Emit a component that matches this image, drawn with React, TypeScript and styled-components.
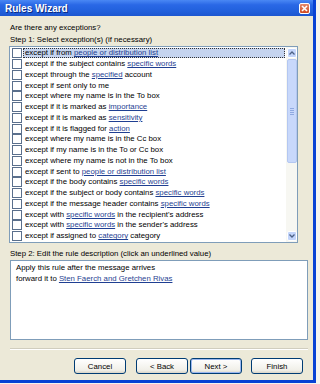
import React from "react";
import styled, { createGlobalStyle } from "styled-components";

const Global = createGlobalStyle`
  html, body { margin: 0; padding: 0; background: #f4f4f0; }
  body { font-family: Tahoma, "Liberation Sans", Arial, sans-serif; }
`;

const Window = styled.div`
  width: 313px;
  height: 380px;
  background: #ece9d8;
  border-right: 3px solid #0842d4;
  border-bottom: 3px solid #0842d4;
  display: flex;
  flex-direction: column;
`;

const TitleBar = styled.div`
  height: 16px;
  flex: none;
  background: linear-gradient(#4a88f4 0%, #2a68e6 30%, #2160dc 70%, #1c56d0 100%);
  display: flex;
  align-items: center;
  justify-content: space-between;
  padding: 0 3px 0 5px;
`;

const Title = styled.span`
  color: #fff;
  font-family: "Liberation Sans", Arial, sans-serif;
  font-weight: bold;
  font-size: 10px;
  text-shadow: 1px 1px 0 #0a2a80;
`;

const CloseBtn = styled.div`
  width: 9px;
  height: 9px;
  border: 1px solid #fff;
  border-radius: 2px;
  background: linear-gradient(#e58a6c, #d14a22);
  display: flex;
  align-items: center;
  justify-content: center;
`;

const Body = styled.div`
  flex: 1;
  display: flex;
  flex-direction: column;
  padding: 6px 7px 0 10px;
  font-family: "Liberation Sans", Arial, sans-serif;
  font-size: 7.8px;
  color: #000;
`;

const Label = styled.div<{ $mt?: number }>`
  height: 11px;
  line-height: 11px;
  margin-top: ${(p) => p.$mt ?? 0}px;
  white-space: nowrap;
`;

const ListBox = styled.div`
  margin-top: 1px;
  margin-left: -1px;
  width: 287px;
  height: 195px;
  border: 1px solid #7f9db9;
  background: #fff;
  display: flex;
`;

const Rows = styled.div`
  flex: 1;
  padding-top: 1px;
  display: flex;
  flex-direction: column;
`;

const Row = styled.div`
  height: 10.75px;
  display: flex;
  align-items: center;
  padding-left: 2px;
  white-space: nowrap;
`;

const Check = styled.span`
  width: 8px;
  height: 8px;
  flex: none;
  border: 1px solid #5a6f8c;
  background: #fff;
  margin-right: 1px;
`;

const RowText = styled.span<{ $sel?: boolean }>`
  flex: 1;
  height: 10px;
  line-height: 10px;
  padding-left: 2px;
  background: ${(p) => (p.$sel ? "#c5d4ef" : "transparent")};
  outline: ${(p) => (p.$sel ? "1px dotted #333" : "none")};
  outline-offset: -1px;
  margin-right: 1px;
`;

const Link = styled.span`
  color: #1f3f92;
  text-decoration: underline;
`;

const ScrollBar = styled.div`
  width: 11px;
  flex: none;
  background: #f7f7f2;
  display: flex;
  flex-direction: column;
  align-items: center;
`;

const ArrowBtn = styled.div`
  width: 10px;
  height: 10px;
  margin-top: 1px;
  margin-bottom: 1px;
  border: 1px solid #fff;
  box-sizing: border-box;
  border-radius: 2px;
  background: #c3d5fb;
  display: flex;
  align-items: center;
  justify-content: center;
`;

const Thumb = styled.div`
  width: 10px;
  height: 104px;
  box-sizing: border-box;
  border: 1px solid #b4c7f1;
  border-radius: 2px;
  background: #c8d8fb;
  display: flex;
  flex-direction: column;
  align-items: center;
  justify-content: center;
  gap: 1px;
`;

const Grip = styled.span`
  width: 4px;
  height: 1px;
  background: #8fa9e0;
`;

const Track = styled.div`
  flex: 1;
`;

const DescBox = styled.div`
  margin-top: 1px;
  width: 286px;
  height: 76px;
  border: 1px solid #7f9db9;
  background: #fff;
  padding: 1px 5px;
`;

const DescLine = styled.div`
  height: 11px;
  line-height: 11px;
  white-space: nowrap;
`;

const Separator = styled.div`
  margin-top: 8px;
  width: 298px;
  height: 0;
  border-top: 1px solid #d0cdbe;
  border-bottom: 1px solid #fff;
`;

const ButtonRow = styled.div`
  margin-top: 8px;
  display: flex;
  justify-content: flex-end;
  padding-right: 3px;
`;

const Button = styled.div<{ $def?: boolean; $gap?: number }>`
  width: 52px;
  height: 16px;
  box-sizing: border-box;
  margin-left: ${(p) => p.$gap ?? 0}px;
  border: 1px solid #003c74;
  border-radius: 3px;
  background: linear-gradient(#ffffff, #f0efe8 80%, #d8d4c8);
  box-shadow: ${(p) => (p.$def ? "inset 0 0 0 1px #9bb7ef" : "none")};
  display: flex;
  align-items: center;
  justify-content: center;
  font-size: 7.8px;
`;

const rows: React.ReactNode[] = [
  <>except if from <Link>people or distribution list</Link></>,
  <>except if the subject contains <Link>specific words</Link></>,
  <>except through the <Link>specified</Link> account</>,
  <>except if sent only to me</>,
  <>except where my name is in the To box</>,
  <>except if it is marked as <Link>importance</Link></>,
  <>except if it is marked as <Link>sensitivity</Link></>,
  <>except if it is flagged for <Link>action</Link></>,
  <>except where my name is in the Cc box</>,
  <>except if my name is in the To or Cc box</>,
  <>except where my name is not in the To box</>,
  <>except if sent to <Link>people or distribution list</Link></>,
  <>except if the body contains <Link>specific words</Link></>,
  <>except if the subject or body contains <Link>specific words</Link></>,
  <>except if the message header contains <Link>specific words</Link></>,
  <>except with <Link>specific words</Link> in the recipient's address</>,
  <>except with <Link>specific words</Link> in the sender's address</>,
  <>except if assigned to <Link>category</Link> category</>,
];

export default function App() {
  return (
    <>
      <Global />
      <Window>
        <TitleBar>
          <Title>Rules Wizard</Title>
          <CloseBtn>
            <svg width="7" height="7" viewBox="0 0 7 7">
              <path d="M1 1 L6 6 M6 1 L1 6" stroke="#fff" strokeWidth="1.6" />
            </svg>
          </CloseBtn>
        </TitleBar>
        <Body>
          <Label>Are there any exceptions?</Label>
          <Label $mt={1}>Step 1: Select exception(s) (if necessary)</Label>
          <ListBox>
            <Rows>
              {rows.map((r, i) => (
                <Row key={i}>
                  <Check />
                  <RowText $sel={i === 0}>{r}</RowText>
                </Row>
              ))}
            </Rows>
            <ScrollBar>
              <ArrowBtn>
                <svg width="6" height="4" viewBox="0 0 6 4">
                  <path d="M0.5 3.5 L3 1 L5.5 3.5" stroke="#4d6185" strokeWidth="1.3" fill="none" />
                </svg>
              </ArrowBtn>
              <Thumb>
                <Grip />
                <Grip />
                <Grip />
                <Grip />
              </Thumb>
              <Track />
              <ArrowBtn>
                <svg width="6" height="4" viewBox="0 0 6 4">
                  <path d="M0.5 0.5 L3 3 L5.5 0.5" stroke="#4d6185" strokeWidth="1.3" fill="none" />
                </svg>
              </ArrowBtn>
            </ScrollBar>
          </ListBox>
          <Label $mt={5}>Step 2: Edit the rule description (click an underlined value)</Label>
          <DescBox>
            <DescLine>Apply this rule after the message arrives</DescLine>
            <DescLine>
              forward it to <Link>Sten Faerch and Gretchen Rivas</Link>
            </DescLine>
          </DescBox>
          <Separator />
          <ButtonRow>
            <Button>Cancel</Button>
            <Button $gap={10}>&lt; Back</Button>
            <Button $gap={2} $def>Next &gt;</Button>
            <Button $gap={9}>Finish</Button>
          </ButtonRow>
        </Body>
      </Window>
    </>
  );
}
